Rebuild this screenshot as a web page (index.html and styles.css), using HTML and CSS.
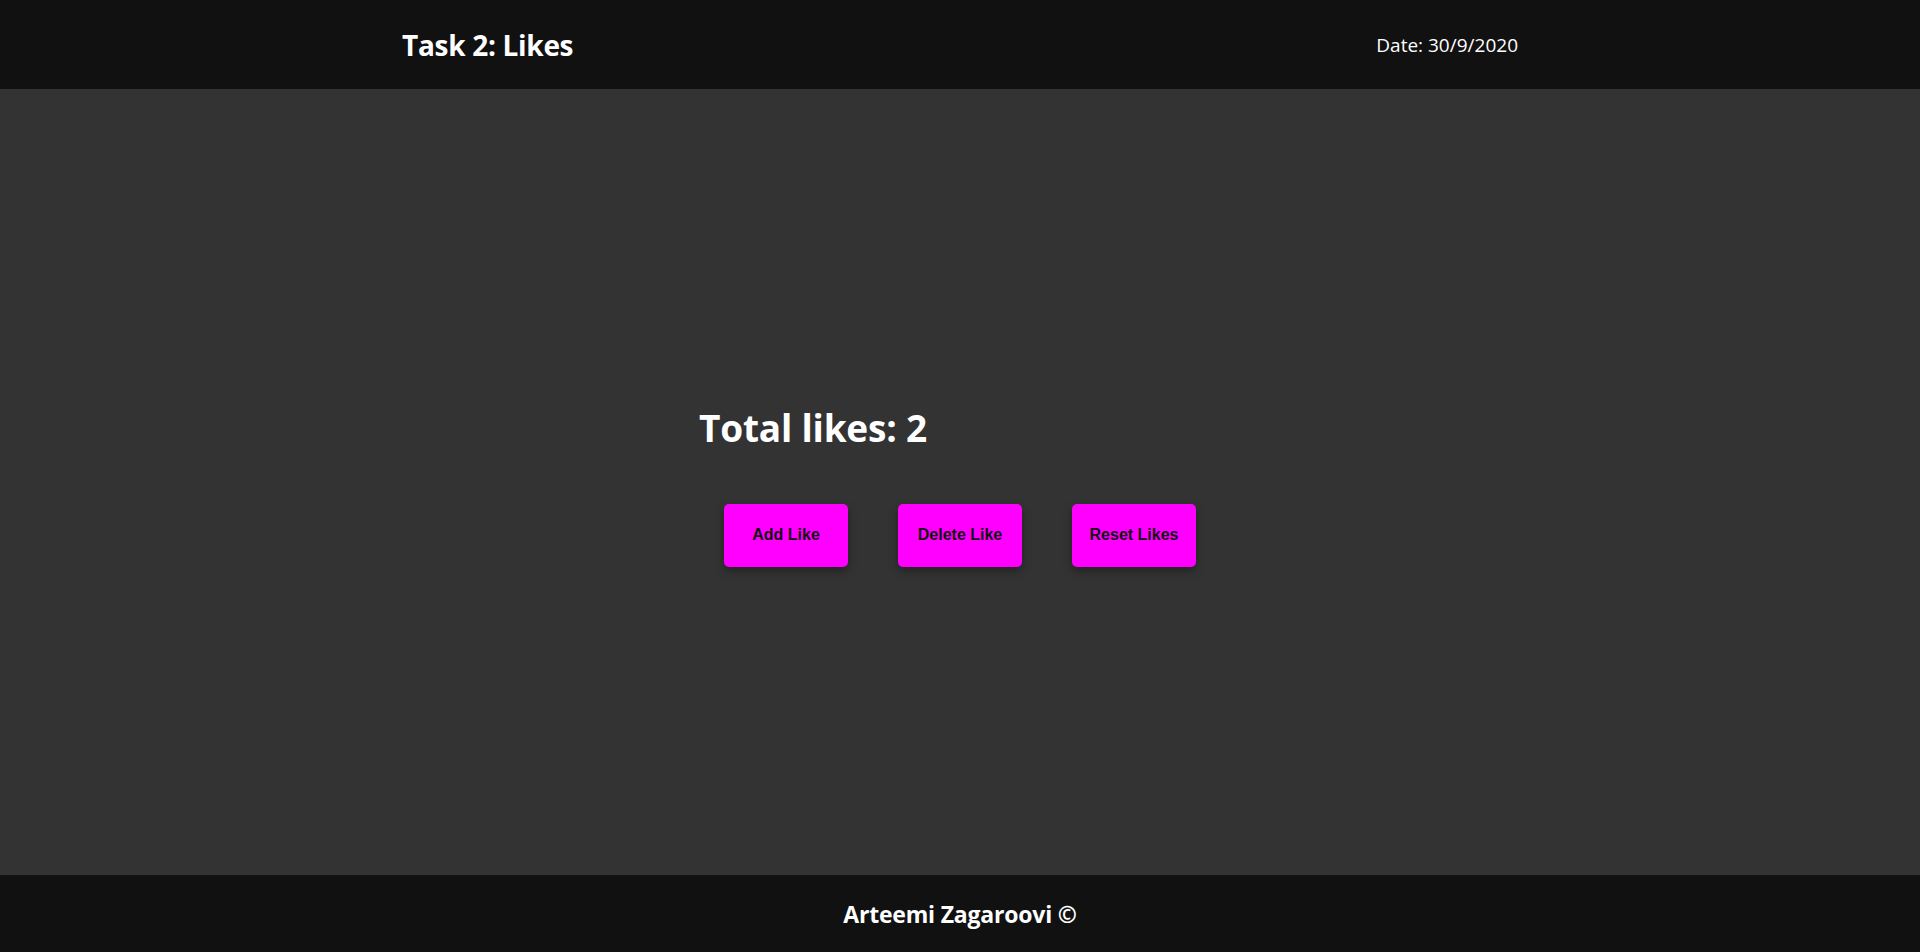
FILE: index.html
```html
<!DOCTYPE html>
<html lang="en">
<head>
<meta charset="utf-8">
<title>Task 2: Likes</title>
<link rel="stylesheet" href="styles.css">
</head>
<body>
<header class="site-header">
  <div class="container header-row">
    <h1 class="title">Task 2: Likes</h1>
    <span class="date">Date: 30/9/2020</span>
  </div>
</header>
<main class="main">
  <div class="likes">
    <h2 class="total">Total likes: 2</h2>
    <div class="buttons">
      <button class="btn">Add Like</button>
      <button class="btn">Delete Like</button>
      <button class="btn">Reset Likes</button>
    </div>
  </div>
</main>
<footer class="site-footer">
  <p class="credit">Arteemi Zagaroovi ©</p>
</footer>
</body>
</html>
```

FILE: styles.css
```css
* { box-sizing: border-box; }
html, body { margin: 0; padding: 0; }
body {
  min-height: 100vh;
  display: flex;
  flex-direction: column;
  background: #333333;
  color: #ffffff;
  font-family: "Open Sans", "Noto Sans", sans-serif;
}
.site-header {
  background: #111111;
  height: 89px;
  display: flex;
  align-items: center;
}
.container {
  width: 1140px;
  margin: 0 auto;
  padding: 0 12px;
}
.header-row {
  display: flex;
  justify-content: space-between;
  align-items: center;
}
.title {
  margin: 0;
  font-size: 28px;
  font-weight: 700;
  letter-spacing: -0.3px;
}
.date {
  font-size: 19px;
  font-weight: 400;
}
.main {
  flex: 1;
  display: flex;
  align-items: center;
  justify-content: center;
}
.likes {
  display: flex;
  flex-direction: column;
  align-items: flex-start;
  padding-top: 9px;
}
.total {
  margin: 0 0 53px 0;
  font-size: 37px;
  font-weight: 700;
  line-height: 1.2;
  letter-spacing: -0.2px;
}
.buttons {
  display: flex;
}
.btn {
  width: 124px;
  height: 63px;
  margin: 0 25px;
  border: none;
  border-radius: 5px;
  background: #ff00ff;
  color: #111111;
  font-family: "Liberation Sans", Arial, sans-serif;
  font-size: 16px;
  font-weight: 700;
  box-shadow: 0 4px 10px rgba(0, 0, 0, 0.35);
  cursor: pointer;
}
.site-footer {
  background: #111111;
  height: 77px;
  display: flex;
  align-items: center;
  justify-content: center;
}
.credit {
  margin: 0;
  font-size: 23px;
  font-weight: 700;
  letter-spacing: -0.2px;
}
```
